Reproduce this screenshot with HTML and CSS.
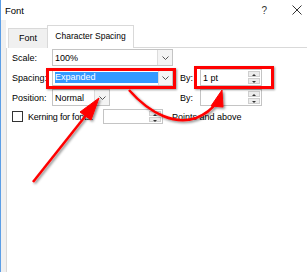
FILE: index.html
```html
<!DOCTYPE html>
<html lang="en">
<head>
    <meta charset="UTF-8">
    <title>Font</title>
    <link rel="stylesheet" href="styles.css">
</head>
<body>
<div class="window">
    <div class="titlebar">
        <span class="title">Font</span>
        <span class="help">?</span>
        <svg class="close" width="10" height="10" viewBox="0 0 10 10">
            <path d="M0.5 0.5 L9.5 9.5 M9.5 0.5 L0.5 9.5" stroke="#333" stroke-width="1" fill="none"/>
        </svg>
    </div>
    <div class="client">
        <div class="tabs">
            <div class="tab">Font</div>
            <div class="tab active">Character Spacing</div>
            <div class="tab-fill"></div>
        </div>
        <div class="panel">
            <div class="row">
                <span class="label">Scale:</span>
                <div class="combo wide">
                    <span class="value">100%</span>
                    <span class="drop"><svg width="7" height="4" viewBox="0 0 7 4"><path d="M0.5 0.5 L3.5 3.5 L6.5 0.5" stroke="#555" fill="none"/></svg></span>
                </div>
            </div>
            <div class="row">
                <span class="label">Spacing:</span>
                <div class="combo wide">
                    <span class="value"><span class="selected">Expanded</span></span>
                    <span class="drop"><svg width="7" height="4" viewBox="0 0 7 4"><path d="M0.5 0.5 L3.5 3.5 L6.5 0.5" stroke="#555" fill="none"/></svg></span>
                </div>
                <span class="label short">By:</span>
                <div class="spin">
                    <span class="value">1 pt</span>
                    <span class="arrows-ud"><span class="up"></span><span class="down"></span></span>
                </div>
            </div>
            <div class="row">
                <span class="label">Position:</span>
                <div class="combo narrow">
                    <span class="value">Normal</span>
                    <span class="drop"><svg width="7" height="4" viewBox="0 0 7 4"><path d="M0.5 0.5 L3.5 3.5 L6.5 0.5" stroke="#555" fill="none"/></svg></span>
                </div>
                <span class="label short">By:</span>
                <div class="spin">
                    <span class="value"></span>
                    <span class="arrows-ud"><span class="up"></span><span class="down"></span></span>
                </div>
            </div>
            <div class="row kerning">
                <span class="check"></span>
                <span class="klabel">Kerning for fonts:</span>
                <div class="spin small">
                    <span class="value"></span>
                    <span class="arrows-ud"><span class="up"></span><span class="down"></span></span>
                </div>
                <span class="plabel">Points and above</span>
            </div>
        </div>
    </div>
    <div class="mark mark-spacing"></div>
    <div class="mark mark-by"></div>
    <svg class="callouts" width="307" height="272" viewBox="0 0 307 272">
        <defs>
            <filter id="shadow" x="-20%" y="-20%" width="140%" height="140%">
                <feDropShadow dx="1.5" dy="1.5" stdDeviation="1" flood-color="#000" flood-opacity="0.45"/>
            </filter>
        </defs>
        <g filter="url(#shadow)" fill="#f00" stroke="#f00">
            <path d="M32 182 L86 114" stroke-width="2.5" fill="none"/>
            <path d="M98 98 L90 120 L79 112 Z" stroke-width="1"/>
            <path d="M128 90 C150 115 175 125 195 118 C205 114 211 109 215 103" stroke-width="2.5" fill="none"/>
            <path d="M221 90 L222 107 L210 106 Z" stroke-width="1"/>
        </g>
    </svg>
</div>
</body>
</html>
```

FILE: styles.css
```css
* {
    box-sizing: border-box;
}
body {
    margin: 0;
    font-family: "Liberation Sans", Arial, sans-serif;
    font-size: 9px;
    color: #000;
}
.window {
    position: relative;
    width: 307px;
    height: 272px;
    background: #fff;
    border-left: 1px solid #5c9ee6;
    overflow: hidden;
}
.titlebar {
    height: 20px;
    display: flex;
    align-items: center;
    padding-left: 4px;
}
.title {
    font-size: 9.5px;
    flex: 1;
}
.help {
    font-size: 10px;
    color: #333;
    margin-right: 25px;
}
.close {
    margin-right: 5px;
}
.client {
    display: flex;
    flex-direction: column;
    height: 252px;
    border-left: 5px solid #f0f0f0;
}
.tabs {
    display: flex;
    align-items: flex-end;
    height: 28px;
}
.tab {
    width: 40px;
    height: 20px;
    line-height: 19px;
    text-align: center;
    white-space: nowrap;
    background: #f0f0f0;
    border: 1px solid #d9d9d9;
    border-bottom: none;
    margin-left: 2px;
}
.tab.active {
    width: 87px;
    height: 23px;
    line-height: 21px;
    font-size: 8.5px;
    background: #fff;
    margin-left: -1px;
}
.tab-fill {
    flex: 1;
    border-bottom: 1px solid #d9d9d9;
}
.panel {
    flex: 1;
    border-left: 1px solid #d9d9d9;
    padding: 1px 0 0 5px;
    display: flex;
    flex-direction: column;
    gap: 3px;
}
.row {
    display: flex;
    align-items: center;
    height: 17px;
}
.label {
    width: 40px;
}
.label.short {
    width: 20px;
}
.combo, .spin {
    height: 17px;
    border: 1px solid #c4c4c4;
    display: flex;
    align-items: stretch;
    background: #fff;
}
.combo.wide {
    width: 121px;
    margin-right: 7px;
}
.combo.narrow {
    width: 58px;
    margin-right: 70px;
}
.value {
    flex: 1;
    padding-left: 2px;
    display: flex;
    align-items: center;
}
.selected {
    background: #3399ff;
    color: #fff;
    width: 103px;
    height: 11px;
    line-height: 11px;
}
.drop {
    width: 15px;
    border-left: 1px solid #dcdcdc;
    background: #f4f4f4;
    display: flex;
    align-items: center;
    justify-content: center;
}
.spin {
    width: 62px;
}
.spin.small {
    width: 60px;
    margin-right: 9px;
}
.arrows-ud {
    width: 13px;
    display: flex;
    flex-direction: column;
    gap: 1px;
    padding: 1px 1px 1px 0;
}
.up, .down {
    flex: 1;
    background: #ececec;
    border: 1px solid #cfcfcf;
    position: relative;
}
.up::after, .down::after {
    content: "";
    position: absolute;
    left: 3px;
    top: 2px;
    border-left: 2px solid transparent;
    border-right: 2px solid transparent;
}
.up::after {
    border-bottom: 2px solid #333;
}
.down::after {
    border-top: 2px solid #333;
}
.kerning {
    height: 15px;
}
.check {
    width: 11px;
    height: 11px;
    border: 1px solid #333;
    margin-right: 5px;
}
.kerning .spin {
    height: 15px;
}
.klabel {
    width: 75px;
    white-space: nowrap;
    letter-spacing: -0.2px;
}
.mark {
    position: absolute;
    border: 3px solid #f00;
    box-shadow: 1px 1px 2px rgba(0, 0, 0, 0.4);
}
.mark-spacing {
    left: 45px;
    top: 68px;
    width: 130px;
    height: 21px;
}
.mark-by {
    left: 193px;
    top: 66px;
    width: 80px;
    height: 23px;
}
.callouts {
    position: absolute;
    left: 0;
    top: 0;
    pointer-events: none;
}
```
